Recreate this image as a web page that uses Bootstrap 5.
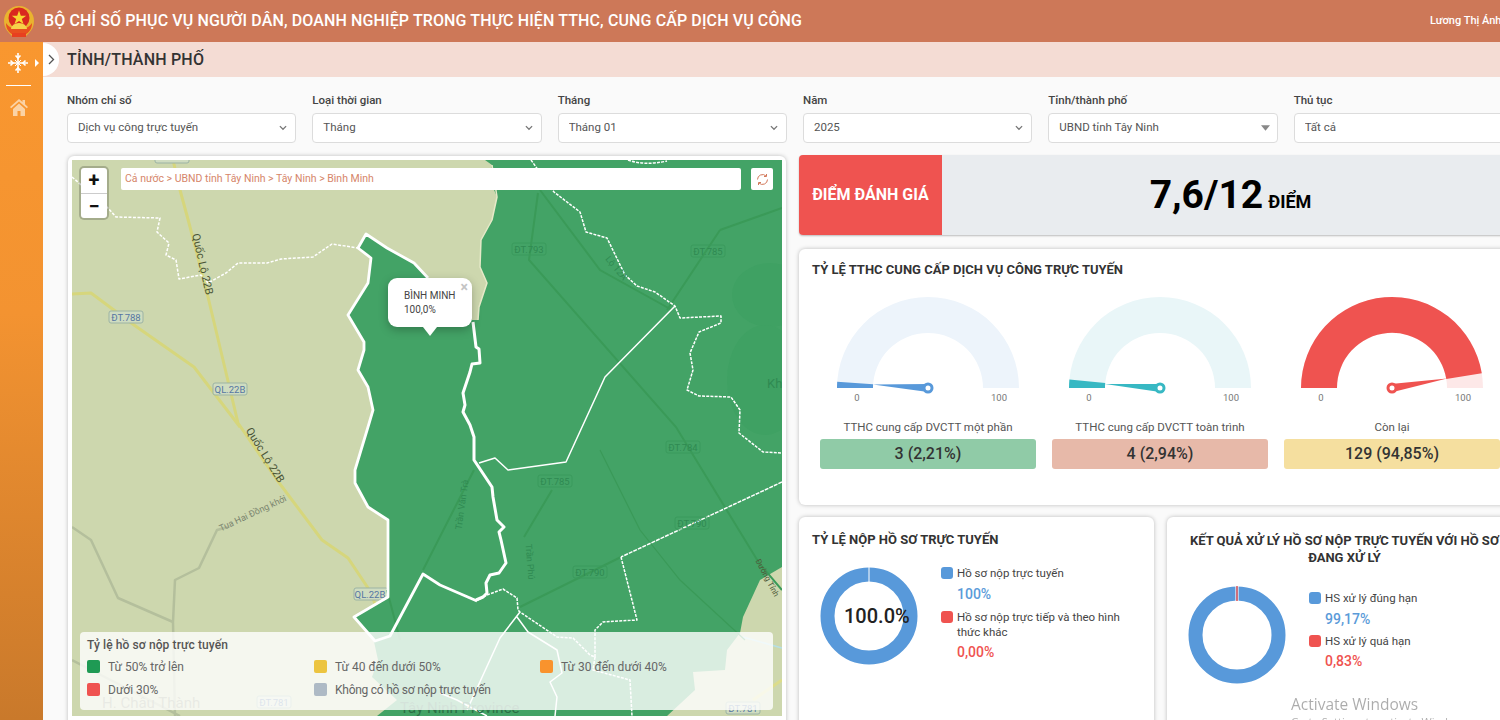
<!DOCTYPE html>
<html lang="vi">
<head>
  <meta charset="UTF-8" />
  <title>Bộ chỉ số phục vụ người dân</title>
  <link href="https://cdn.jsdelivr.net/npm/bootstrap@5.3.2/dist/css/bootstrap.min.css" rel="stylesheet" />
  <style>
    html, body { height: 720px; overflow: hidden; }
    body { font-family: Roboto, "Liberation Sans", sans-serif; background: #fafafa; color: #333; }
    .top-bar { height: 42px; background: #cd7858; color: #fff; }
    .top-logo { width: 34px; height: 36px; margin-left: 2px; margin-right: 8px; flex: none; }
    .top-title { font-size: 16px; font-weight: 500; white-space: nowrap; letter-spacing: .12px; }
    .top-user { font-size: 11px; font-weight: 500; width: 70px; white-space: nowrap; overflow: hidden; }
    .side-bar { width: 43px; height: 678px; flex: none; background: linear-gradient(#f9972f, #f39331 40%, #c9792b); padding-top: 10px; }
    .side-sep { width: 25px; height: 1px; background: #fff; margin: 11px 0 13px 6px; }
    .side-arrow { width: 0; height: 0; border-left: 4px solid #fff; border-top: 4px solid transparent; border-bottom: 4px solid transparent; margin-left: 5px; }
    .side-home { display: block; margin-left: 10px; }
    .main-area { width: 1457px; overflow: hidden; position: relative; }
    .title-bar { height: 35px; background: #f4dcd4; padding: 1px 0 0 24px; font-size: 16px; font-weight: 500; color: #333; letter-spacing: .2px; }
    .toggle-tab { position: absolute; left: 0; top: 1px; width: 16px; height: 33px; background: #fff; border-radius: 0 17px 17px 0; }
    .filter-row { --bs-gutter-x: 16px; width: 1472px; margin: 0 0 0 16px; padding-top: 16px; }
    .filter-row label { display: block; font-size: 11.5px; font-weight: 500; color: #444; line-height: 14px; margin-bottom: 6px; }
    .filter-select { height: 30px; padding: 0 24px 0 10px; font-size: 11.5px; color: #555; border-color: #dcdcdc; border-radius: 4px; background-image: url("data:image/svg+xml,%3csvg xmlns='http://www.w3.org/2000/svg' viewBox='0 0 16 16'%3e%3cpath fill='none' stroke='%23777' stroke-width='2' d='M3 5l5 5 5-5'/%3e%3c/svg%3e"); background-position: right 7px center; background-size: 10px 10px; }
    .select-tri { background-image: url("data:image/svg+xml,%3csvg xmlns='http://www.w3.org/2000/svg' viewBox='0 0 10 6'%3e%3cpath fill='%23888' d='M0 0h10L5 6z'/%3e%3c/svg%3e"); background-size: 9px 6px; }
    .select-plain { background-image: none; }
    .dash-grid { display: flex; gap: 13px; padding: 13px 0 0 25px; width: 1479px; }
    .map-col { width: 718px; flex: none; }
    .info-col { width: 723px; flex: none; margin-top: -1px; }
    .map-card { height: 580px; background: #fff; padding: 4px; border-radius: 6px; box-shadow: 0 0 4px rgba(0,0,0,.25); }
    .map-box { position: relative; height: 556px; overflow: hidden; background: #cdd7ae; }
    .map-svg { display: block; width: 710px; height: 556px; }
    .map-svg text { font-family: Roboto, sans-serif; }
    .zoom-box { position: absolute; left: 9px; top: 8px; width: 26px; background: #fff; border-radius: 3px; box-shadow: 0 0 0 2px rgba(0,0,0,.2); }
    .zoom-box div { height: 25px; line-height: 24px; text-align: center; font-size: 20px; font-weight: 700; color: #111; }
    .zoom-box div + div { border-top: 1px solid #ccc; }
    .crumb-box { position: absolute; left: 49px; top: 8px; width: 620px; height: 22px; background: #fff; border-radius: 2px; padding-left: 4px; font-size: 10.5px; line-height: 22px; color: #d6866a; }
    .reload-box { position: absolute; left: 679px; top: 8px; width: 22px; height: 22px; background: #fff; border-radius: 2px; }
    .map-popup { position: absolute; left: 316px; top: 118px; width: 84px; height: 49px; background: #fff; border-radius: 9px; box-shadow: 0 3px 10px rgba(0,0,0,.25); padding: 11px 0 0 16px; font-size: 10px; line-height: 14px; color: #444; }
    .map-popup::after { content: ""; position: absolute; left: 35px; top: 49px; border-top: 9px solid #fff; border-left: 7px solid transparent; border-right: 7px solid transparent; }
    .popup-x { position: absolute; right: 4px; top: 2px; font-size: 14px; line-height: 14px; font-weight: 700; color: #c4c4c4; }
    .map-legend { position: absolute; left: 8px; top: 472px; width: 693px; height: 78px; background: rgba(255,255,255,.8); border-radius: 4px; padding: 6px 7px; font-size: 12px; color: #666; }
    .legend-head { font-size: 12px; font-weight: 500; color: #555; line-height: 14px; margin-bottom: 8px; letter-spacing: .1px; }
    .legend-grid { display: grid; grid-template-columns: 227px 226px 150px; row-gap: 10px; }
    .legend-item { display: flex; align-items: center; gap: 8px; height: 13px; white-space: nowrap; }
    .legend-tight { letter-spacing: -.25px; }
    .swatch { width: 13px; height: 13px; border-radius: 2px; flex: none; }
    .c-green { background: #1f9a54; }
    .c-yellow { background: #ecc440; }
    .c-orange { background: #f9932d; }
    .c-red { background: #ef5350; }
    .c-gray { background: #aebac5; }
    .c-blue { background: #5899da; }
    .score-card { height: 80px; background: #e9ecef; border-radius: 4px; box-shadow: 0 1px 2px rgba(0,0,0,.25); overflow: hidden; }
    .score-label { width: 143px; flex: none; background: #ef5350; color: #fff; font-size: 16px; font-weight: 700; }
    .score-value { width: 577px; font-size: 39px; font-weight: 700; color: #000; line-height: 1; }
    .score-value span { font-size: 18px; margin-left: 5px; }
    .info-card { background: #fff; border-radius: 6px; box-shadow: 0 0 4px rgba(0,0,0,.25); }
    .gauge-card { height: 256px; margin-top: 14px; padding: 14px 13px 0; }
    .card-head { font-size: 13px; font-weight: 700; color: #333; line-height: 14px; }
    .two-line { line-height: 17px; }
    .gauge-row { --bs-gutter-x: 16px; width: 696px; margin: 0 0 0 0; padding-top: 20px; }
    .gauge-svg { display: block; width: 200px; height: 110px; margin: 0 auto; }
    .gauge-svg text { font-family: Roboto, sans-serif; font-size: 9.5px; fill: #777; text-anchor: middle; }
    .gauge-name { font-size: 11.5px; line-height: 14px; color: #555; margin: 13px 0 5px; text-align: center; }
    .gauge-num { height: 30px; border-radius: 3px; text-align: center; font-size: 16px; font-weight: 500; line-height: 30px; color: #333; }
    .num-a { background: #90cba7; }
    .num-b { background: #e7b9a9; }
    .num-c { background: #f5df9f; }
    .low-row { display: flex; gap: 13px; margin-top: 12px; }
    .low-card { width: 355px; height: 220px; padding: 15px 13px 0; flex: none; position: relative; }
    .first-head { padding-top: 1px; }
    .donut-svg { display: block; width: 98px; height: 98px; flex: none; }
    .donut-text { position: absolute; left: 45px; top: 87px; font-size: 20px; font-weight: 500; line-height: 24px; color: #222; }
    .pie-legend { font-size: 11.5px; line-height: 15px; color: #444; margin: -1px 0 0 23px; }
    .pie-tight { margin-top: 0; padding-top: 5px; }
    .pie-line { position: relative; padding-left: 16px; }
    .pie-line .swatch { position: absolute; left: 0; top: 1px; width: 12px; height: 12px; border-radius: 3px; }
    .pie-val { padding-left: 16px; font-size: 14px; font-weight: 500; line-height: 16px; margin: 5px 0 8px; }
    .pie-tight .pie-val { margin-bottom: 7px; }
    .pie-wrap-val { margin-top: 4px; }
    .val-blue { color: #5b9bd9; }
    .val-red { color: #ef5350; }
    .activate-mark { position: fixed; left: 1291px; top: 694px; font-family: "Open Sans", sans-serif; font-size: 15.5px; line-height: 20px; color: rgba(0,0,0,.33); white-space: nowrap; pointer-events: none; }
    .activate-mark small { display: block; font-size: 11px; line-height: 15px; }
  </style>
</head>
<body>
  <!-- Top bar -->
  <div class="top-bar d-flex align-items-center">
    <svg class="top-logo" viewBox="0 0 34 36">
      <path d="M17 3C8 3 2 10 2 18c0 5 2 9 5 12l4 4h12l4-4c3-3 5-7 5-12 0-8-6-15-15-15z" fill="#eab32f"/>
      <path d="M4 20c0 6 3 10 8 12h10c5-2 8-6 8-12-3 4-6 6-13 6S7 24 4 20z" fill="#e8501f"/>
      <circle cx="17" cy="15" r="10.5" fill="#d9281f"/>
      <path d="M17 7.5l1.8 5.2h5.4l-4.4 3.2 1.7 5.2-4.5-3.2-4.5 3.2 1.7-5.2-4.4-3.2h5.4z" fill="#f7d631"/>
      <path d="M9 26a8 6 0 0 1 16 0z" fill="#f6d24a"/>
      <rect x="10" y="30" width="14" height="4" fill="#e8401f"/>
    </svg>
    <div class="top-title">BỘ CHỈ SỐ PHỤC VỤ NGƯỜI DÂN, DOANH NGHIỆP TRONG THỰC HIỆN TTHC, CUNG CẤP DỊCH VỤ CÔNG</div>
    <div class="top-user ms-auto">Lương Thị Ánh</div>
  </div>

  <div class="d-flex">
    <!-- Sidebar -->
    <div class="side-bar">
      <div class="d-flex align-items-center">
        <svg width="26" height="22" viewBox="0 0 26 22" class="ms-1 flex-shrink-0">
          <g stroke="#fff" stroke-width="1.6" fill="none">
            <path d="M14 1v20M4 11h20"/>
            <path d="M11.5 3.5L14 6l2.5-2.5M11.5 18.500L14 16l2.500 2.500M6.500 8.500L9 11l-2.500 2.500M21.500 8.500L19 11l2.500 2.500"/>
            <path d="M11 8l6 6M17 8l-6 6" stroke-width="1"/>
          </g>
        </svg>
        <div class="side-arrow"></div>
      </div>
      <div class="side-sep"></div>
      <svg width="18" height="17" viewBox="0 0 18 17" class="side-home">
        <path fill="#fbd3a5" d="M9 0L0 8l1.200 1.300L9 2.400l7.800 6.900L18 8l-3-2.700V1h-2.500v2.100zM3 10v7h4.500v-5h3v5H15v-7L9 4.600z"/>
      </svg>
    </div>

    <!-- Main -->
    <div class="main-area">
      <div class="title-bar d-flex align-items-center">TỈNH/THÀNH PHỐ</div>
      <div class="toggle-tab d-flex align-items-center justify-content-center">
        <svg width="7" height="11" viewBox="0 0 7 11"><path d="M1 1l4.500 4.500L1 10" fill="none" stroke="#555" stroke-width="1.300"/></svg>
      </div>

      <!-- Filters -->
      <div class="row filter-row">
        <div class="col-2">
          <label>Nhóm chỉ số</label>
          <select class="form-select filter-select"><option>Dịch vụ công trực tuyến</option></select>
        </div>
        <div class="col-2">
          <label>Loại thời gian</label>
          <select class="form-select filter-select"><option>Tháng</option></select>
        </div>
        <div class="col-2">
          <label>Tháng</label>
          <select class="form-select filter-select"><option>Tháng 01</option></select>
        </div>
        <div class="col-2">
          <label>Năm</label>
          <select class="form-select filter-select"><option>2025</option></select>
        </div>
        <div class="col-2">
          <label>Tỉnh/thành phố</label>
          <select class="form-select filter-select select-tri"><option>UBND tỉnh Tây Ninh</option></select>
        </div>
        <div class="col-2">
          <label>Thủ tục</label>
          <select class="form-select filter-select select-plain"><option>Tất cả</option></select>
        </div>
      </div>

      <div class="dash-grid">
        <!-- Map -->
        <div class="map-col">
          <div class="map-card">
            <div class="map-box">
              <svg class="map-svg" viewBox="72 160 710 556">
                <rect x="72" y="160" width="710" height="556" fill="#cdd7ae"/>
                <!-- land roads -->
                <g fill="none" stroke-linejoin="round">
                  <path d="M72 527L91 540 118 598 173 622 175 580 199 568 217 530 228 527M173 622L175 716M72 660L130 690 180 716" stroke="#b4bf9c" stroke-width="2.500"/>
                  <path d="M173 160L180 190 189 223 208 297 238 423 277 480 322 540 348 558 368 588 387 630" stroke="#d6d67c" stroke-width="3"/>
                  <path d="M72 294L91 293 134 325 194 367 240 427" stroke="#d6d67c" stroke-width="3"/>
                  <path d="M743 637L782 648" stroke="#b5dfe6" stroke-width="1.500"/>
                  <path d="M782 680L753 700" stroke="#dcdc8a" stroke-width="3"/>
                  <path d="M72 177L107 207 116 217 160 218 157 232 169 243 166 255 176 260 179 279 201 275 208 283 226 273 238 263 267 263 281 259 313 257 332 244 358 248" stroke="#fff" stroke-width="1.500" stroke-dasharray="3 1.500"/>
                </g>
                <g font-size="9.500" text-anchor="middle">
                  <rect x="354" y="588" width="34" height="12" rx="2" fill="#cfdcc0" stroke="#9cb3a4"/>
                  <text x="370" y="597.500" fill="#5576a3">QL.22B</text>
                </g>
                <!-- province fill -->
                <path fill="#43a366" d="M485 160L782 160 782 567 760 580 743 617 740 633 727 650 725 670 693 672 695 690 667 716 377 716 397 700 372 677 378 660 373 637 354 617 388 597 388 520 368 507 355 483 355 470 368 427 373 410 368 387 358 370 364 350 364 342 348 315 368 283 371 258 358 248 366 234 387 248 414 263 428 278 472 320 478 320 479 307 487 283 480 267 481 240 492 220 497 197 490 180 492 165z"/>
                <ellipse cx="770" cy="295" rx="38" ry="32" fill="#3fa163"/>
                <ellipse cx="765" cy="380" rx="38" ry="55" fill="#3fa163"/>
                <!-- roads on the province -->
                <g fill="none" stroke="#3a9a58" stroke-width="2">
                  <path d="M538 193L529 260 676 427 759 563 782 590M720 230L667 310M720 230L782 208"/>
                  <path d="M524 537L552 490M520 607L621 557M474 470L423 570M387 590L400 640M540 190L600 270 672 310"/>
                  <path d="M600 450L640 530 680 580 745 640" stroke-width="1.200"/>
                </g>
                <!-- borders -->
                <g fill="none" stroke="#fff" stroke-linejoin="round">
                  <path d="M531 160L554 192 580 212 586 232 607 238 625 275 637 286 655 292 675 306 680 318 721 316 721 323 699 332 690 353 693 370 687 390 699 396 731 397 740 410 739 433 763 452 782 453M628 160Q645 166 667 161" stroke-width="1.500" stroke-dasharray="3 1.200"/>
                  <path d="M492 165L497 197 492 220 481 240 480 267 487 283 479 307 478 320" stroke="#e6e9c8" stroke-width="1.500"/>
                  <path d="M675 306L605 377 566 462 508 470 495 458 479 463" stroke-width="1.500"/>
                  <path d="M782 482L621 557" stroke-width="1.500" stroke-dasharray="4 1"/>
                  <path d="M621 557L637 620 603 622 595 630 595 657 590 655 573 638 557 637 520 612 518 610 517 598 503 589 487 595 478 600" stroke-width="1.500" stroke-dasharray="3 1.200"/>
                  <path d="M595 657L593 670 630 680 632 716" stroke-width="1.500" stroke-dasharray="3 1.200"/>
                  <path d="M520 612L500 638 467 710M517 617L528 632 557 650 562 673 550 682 557 697 555 716M440 693L457 700 487 716" stroke-width="1.500"/>
                  <path d="M428 278L414 263 387 248 366 234 358 248 371 258 368 283 348 315 364 342 364 350 358 370 368 387 373 410 368 427 355 470 355 483 368 507 388 520 388 597 354 617 375 641 390 636 423 574 440 585 477 601" stroke-width="2.800"/>
                  <path d="M473 322L476 347 479 349 480 363 472 364 470 372 463 393 465 405 463 412 470 425 474 437 474 460 492 487 493 497 497 520 504 527 499 532 501 540 506 563 499 573 490 575 486 583 487 593 483 597 476 600" stroke-width="3"/>
                </g>
                <!-- road shields -->
                <g font-size="9.500" text-anchor="middle">
                  <g fill="#cfdcc0" stroke="#9cb3a4">
                    <rect x="155" y="152" width="34" height="11" rx="2"/>
                    <rect x="109" y="311" width="34" height="12" rx="2"/>
                    <rect x="213" y="383" width="34" height="12" rx="2"/>
                    <rect x="257" y="696" width="34" height="12" rx="2"/>
                    <rect x="726" y="702" width="34" height="12" rx="2"/>
                  </g>
                  <g fill="#5576a3">
                    <text x="126" y="320.500">ĐT.788</text>
                    <text x="230" y="392.500">QL.22B</text>
                    <text x="274" y="705.500">ĐT.781</text>
                    <text x="743" y="711.500">ĐT.781</text>
                  </g>
                  <g fill="none" stroke="#3a9a5c">
                    <rect x="512" y="243" width="34" height="12" rx="2"/>
                    <rect x="691" y="245" width="34" height="12" rx="2"/>
                    <rect x="666" y="441" width="34" height="12" rx="2"/>
                    <rect x="538" y="475" width="34" height="12" rx="2"/>
                    <rect x="675" y="517" width="34" height="12" rx="2"/>
                    <rect x="573" y="566" width="34" height="12" rx="2"/>
                  </g>
                  <g fill="#2f8a52">
                    <text x="529" y="252.500">ĐT.793</text>
                    <text x="708" y="254.500">ĐT.785</text>
                    <text x="683" y="450.500">ĐT.784</text>
                    <text x="555" y="484.500">ĐT.785</text>
                    <text x="692" y="526.500">ĐT.790</text>
                    <text x="590" y="575.500">ĐT.790</text>
                  </g>
                </g>
                <g font-size="11" fill="#4a5536" text-anchor="middle">
                  <text transform="translate(199 265) rotate(77)">Quốc Lộ 22B</text>
                  <text transform="translate(262 457) rotate(58)">Quốc Lộ 22B</text>
                  <text transform="translate(254 516) rotate(-25)" font-size="9" fill="#7d8771">Tua Hai Đồng khởi</text>
                </g>
                <g font-size="9" fill="#2f8a52" text-anchor="middle">
                  <text transform="translate(465 505) rotate(-82)">Trần Văn Trà</text>
                  <text transform="translate(527 562) rotate(85)">Trần Phú</text>
                  <text transform="translate(614 270) rotate(50)">Lộ 12A</text>
                </g>
                <text transform="translate(765 579) rotate(62)" font-size="8" fill="#4f5a3a" text-anchor="middle">Đường Tỉnh</text>
                <text x="102" y="708" font-size="15" fill="#8d9578">H. Châu Thành</text>
                <text x="400" y="713" font-size="15" fill="#2b6f45">Tây Ninh Province</text>
                <text x="767" y="388" font-size="13" fill="#2f8a52">Kh</text>
              </svg>

              <div class="zoom-box"><div>+</div><div>−</div></div>
              <div class="crumb-box">Cả nước &gt; UBND tỉnh Tây Ninh &gt; Tây Ninh &gt; Bình Minh</div>
              <div class="reload-box d-flex align-items-center justify-content-center">
                <svg width="13" height="13" viewBox="0 0 13 13"><g fill="none" stroke="#d2785a"><path d="M1.500 6.500a5 5 0 0 1 8.500-3.500M11.500 6.500a5 5 0 0 1-8.500 3.500"/><path d="M10.500 1v2.500H8M2.500 12V9.500H5"/></g></svg>
              </div>

              <div class="map-popup">
                <span class="popup-x">×</span>
                BÌNH MINH<br />100,0%
              </div>

              <div class="map-legend">
                <div class="legend-head">Tỷ lệ hồ sơ nộp trực tuyến</div>
                <div class="legend-grid">
                  <div class="legend-item"><span class="swatch c-green"></span>Từ 50% trở lên</div>
                  <div class="legend-item"><span class="swatch c-yellow"></span>Từ 40 đến dưới 50%</div>
                  <div class="legend-item"><span class="swatch c-orange"></span>Từ 30 đến dưới 40%</div>
                  <div class="legend-item"><span class="swatch c-red"></span>Dưới 30%</div>
                  <div class="legend-item legend-tight"><span class="swatch c-gray"></span>Không có hồ sơ nộp trực tuyến</div>
                </div>
              </div>
            </div>
          </div>
        </div>

        <!-- Right column -->
        <div class="info-col">
          <div class="score-card d-flex">
            <div class="score-label d-flex align-items-center justify-content-center">ĐIỂM ĐÁNH GIÁ</div>
            <div class="score-value d-flex align-items-center justify-content-center">7,6/12<span class="align-self-end mb-4">ĐIỂM</span></div>
          </div>

          <div class="info-card gauge-card">
            <div class="card-head">TỶ LỆ TTHC CUNG CẤP DỊCH VỤ CÔNG TRỰC TUYẾN</div>
            <div class="row gauge-row">
              <div class="col-4">
                <svg class="gauge-svg" viewBox="-100 -91 200 110">
                  <path d="M-91 0A91 91 0 0 1 91 0L55 0A55 55 0 0 0-55 0z" fill="#edf4fb"/>
                  <path d="M-91 0A91 91 0 0 1-90.800-6.300L-54.900-3.800A55 55 0 0 0-55 0z" fill="#5899da"/>
                  <path d="M-55-3.500L0-4 0 4z" fill="#5899da"/>
                  <circle r="4" fill="#fff" stroke="#5899da" stroke-width="3"/>
                  <text x="-71" y="13">0</text><text x="71" y="13">100</text>
                </svg>
                <div class="gauge-name">TTHC cung cấp DVCTT một phần</div>
                <div class="gauge-num num-a">3 (2,21%)</div>
              </div>
              <div class="col-4">
                <svg class="gauge-svg" viewBox="-100 -91 200 110">
                  <path d="M-91 0A91 91 0 0 1 91 0L55 0A55 55 0 0 0-55 0z" fill="#e9f6f8"/>
                  <path d="M-91 0A91 91 0 0 1-90.600-8.400L-54.800-5.100A55 55 0 0 0-55 0z" fill="#37b8c3"/>
                  <path d="M-55-4L0-4 0 4z" fill="#37b8c3"/>
                  <circle r="4" fill="#fff" stroke="#37b8c3" stroke-width="3"/>
                  <text x="-71" y="13">0</text><text x="71" y="13">100</text>
                </svg>
                <div class="gauge-name">TTHC cung cấp DVCTT toàn trình</div>
                <div class="gauge-num num-b">4 (2,94%)</div>
              </div>
              <div class="col-4">
                <svg class="gauge-svg" viewBox="-100 -91 200 110">
                  <path d="M-91 0A91 91 0 0 1 91 0L55 0A55 55 0 0 0-55 0z" fill="#fde8e8"/>
                  <path d="M-91 0A91 91 0 0 1 89.800-14.700L54.300-8.900A55 55 0 0 0-55 0z" fill="#ef5350"/>
                  <path d="M55-9.500L-1-4 1 4z" fill="#ef5350"/>
                  <circle r="4" fill="#fff" stroke="#ef5350" stroke-width="3"/>
                  <text x="-71" y="13">0</text><text x="71" y="13">100</text>
                </svg>
                <div class="gauge-name">Còn lại</div>
                <div class="gauge-num num-c">129 (94,85%)</div>
              </div>
            </div>
          </div>

          <div class="low-row">
            <div class="info-card low-card">
              <div class="card-head first-head">TỶ LỆ NỘP HỒ SƠ TRỰC TUYẾN</div>
              <div class="d-flex mt-3 pt-1">
                <svg class="donut-svg ms-2" viewBox="-49 -49 98 98">
                  <circle r="41.500" fill="none" stroke="#5899da" stroke-width="14"/>
                  <path d="M0-49V-34" stroke="#fff"/>
                </svg>
                <div class="pie-legend">
                  <div class="pie-line"><span class="swatch c-blue"></span>Hồ sơ nộp trực tuyến</div>
                  <div class="pie-val val-blue">100%</div>
                  <div class="pie-line"><span class="swatch c-red"></span>Hồ sơ nộp trực tiếp và theo hình<br />thức khác</div>
                  <div class="pie-val pie-wrap-val val-red">0,00%</div>
                </div>
              </div>
              <div class="donut-text">100.0%</div>
            </div>
            <div class="info-card low-card">
              <div class="card-head two-line text-center">KẾT QUẢ XỬ LÝ HỒ SƠ NỘP TRỰC TUYẾN VỚI HỒ SƠ<br />ĐANG XỬ LÝ</div>
              <div class="d-flex mt-3 pt-1">
                <svg class="donut-svg ms-2" viewBox="-49 -49 98 98">
                  <circle r="41.500" fill="none" stroke="#5899da" stroke-width="14"/>
                  <path d="M-1.200-49L-1.200-34M1.200-49L1.200-34" stroke="#fff" stroke-width=".8"/>
                  <path d="M0-49V-34" stroke="#ef5350" stroke-width="1.400"/>
                </svg>
                <div class="pie-legend pie-tight">
                  <div class="pie-line"><span class="swatch c-blue"></span>HS xử lý đúng hạn</div>
                  <div class="pie-val val-blue">99,17%</div>
                  <div class="pie-line"><span class="swatch c-red"></span>HS xử lý quá hạn</div>
                  <div class="pie-val pie-wrap-val val-red">0,83%</div>
                </div>
              </div>
            </div>
          </div>
        </div>
      </div>
    </div>
  </div>

  <div class="activate-mark">Activate Windows<small>Go to Settings to activate Windows.</small></div>

  <script src="https://cdn.jsdelivr.net/npm/bootstrap@5.3.2/dist/js/bootstrap.bundle.min.js"></script>
</body>
</html>
